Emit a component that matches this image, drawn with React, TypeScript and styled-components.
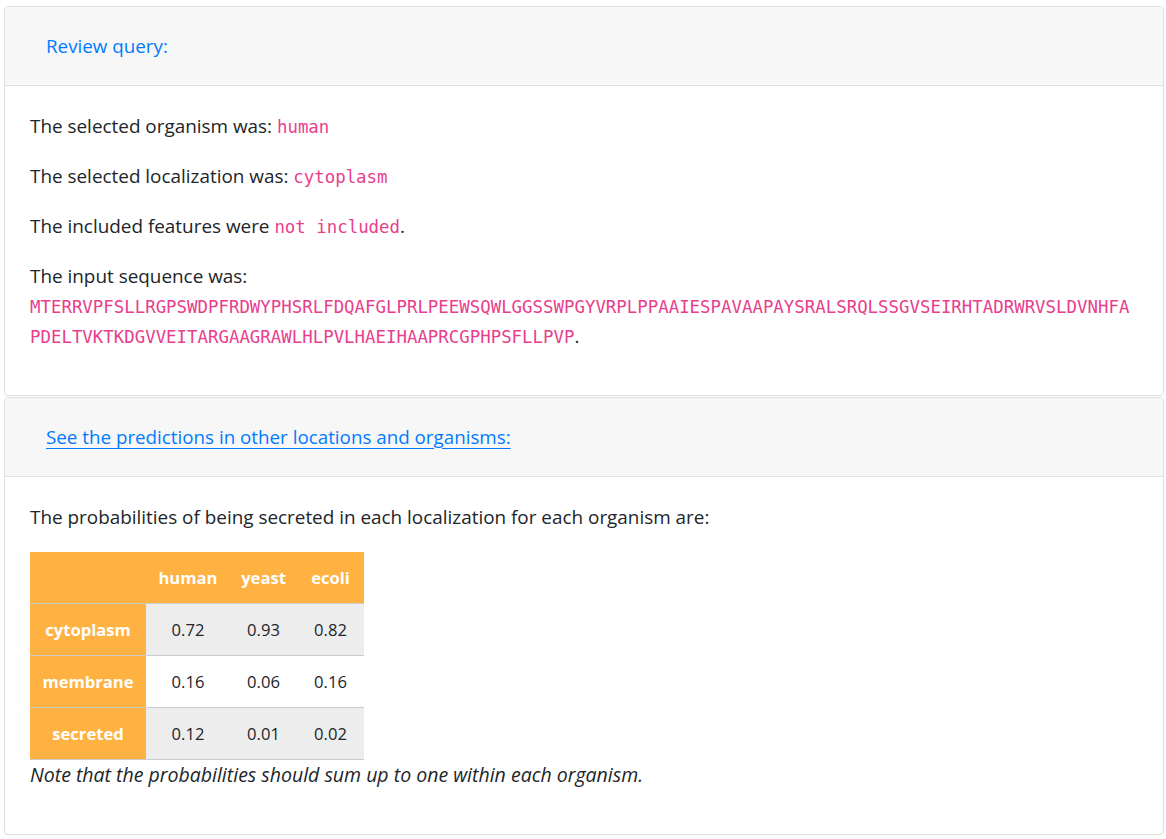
import React from "react";
import styled, { createGlobalStyle } from "styled-components";

const Global = createGlobalStyle`
  html, body { margin: 0; padding: 0; background: #fff; }
  body {
    font-family: "Open Sans", "Noto Sans", sans-serif;
    font-size: 16px;
    color: #212529;
  }
`;

const Page = styled.div`
  padding: 6px 2px 0 4px;
  display: flex;
  flex-direction: column;
  gap: 1px;
`;

const Card = styled.section`
  border: 1px solid #dfdfdf;
  border-radius: 4px;
  background: #fff;
  overflow: hidden;
`;

const CardHeader = styled.div`
  background: #f7f7f7;
  border-bottom: 1px solid #dfdfdf;
  padding: 24px 41px 23px 41px;
  line-height: 30px;
`;

const HeaderLink = styled.a<{ $underline?: boolean }>`
  color: #007bff;
  text-decoration: ${(p) => (p.$underline ? "underline" : "none")};
  text-underline-offset: 4px;
  font-size: 18.8px;
  cursor: pointer;
`;

const CardBody = styled.div`
  padding: 25px 25px 24px 25px;
`;

const P = styled.p`
  margin: 0 0 20px 0;
  font-size: 18.9px;
  line-height: 30px;
`;

const Code = styled.code<{ $break?: boolean }>`
  font-family: "DejaVu Sans Mono", "Liberation Mono", monospace;
  font-size: 17.4px;
  line-height: 1;
  color: #e83e8c;
  word-break: ${(p) => (p.$break ? "break-all" : "normal")};
`;

const Table = styled.table`
  border-collapse: collapse;
  font-size: 16.6px;
`;

const Row = styled.tr<{ $striped?: boolean }>`
  background: ${(p) => (p.$striped ? "#ededed" : "#fff")};
  border-top: 1px solid #cccccc;
  &:last-child { border-bottom: 1px solid #cccccc; }
`;

const HeadRow = styled.tr`
  background: #ffb142;
`;

const Th = styled.th<{ $w: number }>`
  width: ${(p) => p.$w}px;
  box-sizing: border-box;
  background: #ffb142;
  color: #fff;
  font-weight: 700;
  text-align: center;
  padding: 12px 0;
  line-height: 27px;
`;

const Td = styled.td`
  text-align: center;
  padding: 12px 0;
  line-height: 27px;
  color: #212529;
`;

const Note = styled.p`
  margin: 0 0 20px 0;
  font-size: 19.5px;
  line-height: 30px;
  font-style: italic;
`;

const seq =
  "MTERRVPFSLLRGPSWDPFRDWYPHSRLFDQAFGLPRLPEEWSQWLGGSSWPGYVRPLPPAAIESPAVAAPAYSRALSRQLSSGVSEIRHTADRWRVSLDVNHFAPDELTVKTKDGVVEITARGAAGRAWLHLPVLHAEIHAAPRCGPHPSFLLPVP";

const data = [
  { loc: "cytoplasm", v: ["0.72", "0.93", "0.82"] },
  { loc: "membrane", v: ["0.16", "0.06", "0.16"] },
  { loc: "secreted", v: ["0.12", "0.01", "0.02"] },
];

export default function App() {
  return (
    <>
      <Global />
      <Page>
        <Card>
          <CardHeader>
            <HeaderLink>Review query:</HeaderLink>
          </CardHeader>
          <CardBody>
            <P>
              The selected organism was: <Code>human</Code>
            </P>
            <P>
              The selected localization was: <Code>cytoplasm</Code>
            </P>
            <P>
              The included features were <Code>not included</Code>.
            </P>
            <P>
              The input sequence was:
              <br />
              <Code $break>{seq}</Code>.
            </P>
          </CardBody>
        </Card>
        <Card>
          <CardHeader>
            <HeaderLink $underline>See the predictions in other locations and organisms:</HeaderLink>
          </CardHeader>
          <CardBody>
            <P>The probabilities of being secreted in each localization for each organism are:</P>
            <Table>
              <thead>
                <HeadRow>
                  <Th $w={116}></Th>
                  <Th $w={84}>human</Th>
                  <Th $w={67}>yeast</Th>
                  <Th $w={67}>ecoli</Th>
                </HeadRow>
              </thead>
              <tbody>
                {data.map((r, i) => (
                  <Row key={r.loc} $striped={i % 2 === 0}>
                    <Th $w={116}>{r.loc}</Th>
                    {r.v.map((x, j) => (
                      <Td key={j}>{x}</Td>
                    ))}
                  </Row>
                ))}
              </tbody>
            </Table>
            <Note>Note that the probabilities should sum up to one within each organism.</Note>
          </CardBody>
        </Card>
      </Page>
    </>
  );
}
